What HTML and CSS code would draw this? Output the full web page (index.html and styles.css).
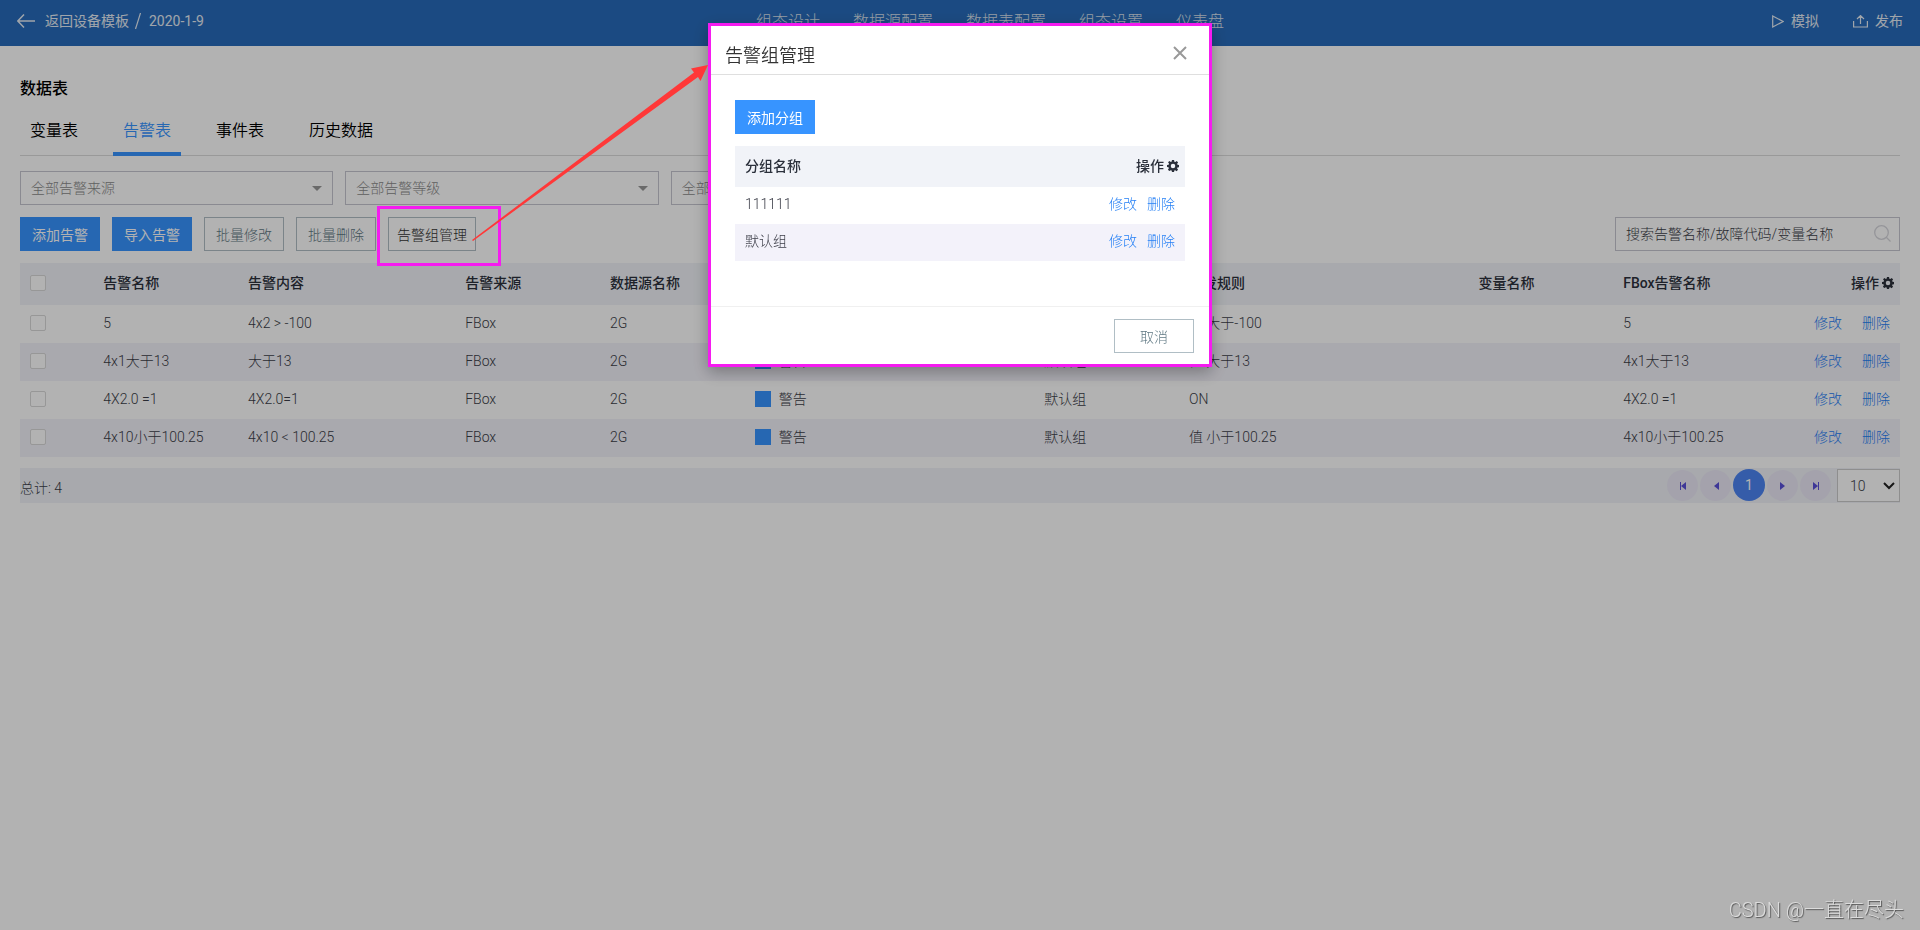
FILE: index.html
```html
<!DOCTYPE html>
<html lang="zh-CN">
<head>
<meta charset="utf-8">
<title>数据表 - 告警表</title>
<link rel="stylesheet" href="styles.css">
</head>
<body>
<svg class="sprite" aria-hidden="true">
  <symbol id="gear" viewBox="0 0 16 16"><path fill-rule="evenodd" d="M6.600 0h2.800l.4 2.200 1.300.5L13 1.400 14.800 3.300l-1.300 1.800.5 1.300 2 .3v2.800l-2.100.4-.5 1.200 1.300 1.900-1.900 1.900-1.800-1.300-1.300.5L9.400 16H6.600l-.4-2-1.200-.5-1.900 1.300-1.900-1.900 1.300-1.800L2 9.800 0 9.400V6.600l2.200-.4.5-1.200L1.400 3.100 3.300 1.200l1.800 1.300L6.300 2zM8 5a3 3 0 1 0 0 6 3 3 0 0 0 0-6z"/></symbol>
  <symbol id="caret" viewBox="0 0 10 5"><path d="M0 0h10L5 5z"/></symbol>
</svg>

<header class="topbar">
  <div class="crumbs">
    <a class="back" href="#"><svg class="back-icon" viewBox="0 0 18 14"><path d="M18 7H1M7 .6.8 7 7 13.400"/></svg>返回设备模板</a>
    <svg class="slash" viewBox="0 0 6 16"><path d="M5.500 0 .5 16"/></svg>
    <span class="crumb-name">2020-1-9</span>
  </div>
  <nav class="mainnav">
    <a href="#">组态设计</a><a href="#">数据源配置</a><a href="#">数据表配置</a><a href="#">组态设置</a><a href="#">仪表盘</a>
  </nav>
  <div class="actions">
    <a href="#"><svg class="play-icon" viewBox="0 0 12 13"><path d="M.7 1v11l10.500-5.500z"/></svg>模拟</a>
    <a href="#"><svg class="publish-icon" viewBox="0 0 15 13"><path d="M.6 6v6h13.800V6M7.500 9V1M4 4l3.500-3.400L11 4"/></svg>发布</a>
  </div>
</header>

<main class="page">
  <h1 class="page-title">数据表</h1>
  <nav class="tabs">
    <a class="tab" href="#">变量表</a><a class="tab tab-active" href="#">告警表</a><a class="tab" href="#">事件表</a><a class="tab" href="#">历史数据</a>
  </nav>

  <div class="filters">
    <div class="picker"><select aria-label="告警来源"><option>全部告警来源</option></select><svg class="caret"><use href="#caret"/></svg></div>
    <div class="picker"><select aria-label="告警等级"><option>全部告警等级</option></select><svg class="caret"><use href="#caret"/></svg></div>
    <div class="picker"><select aria-label="告警组"><option>全部告警组</option></select><svg class="caret"><use href="#caret"/></svg></div>
  </div>

  <div class="toolbar">
    <button class="btn btn-primary">添加告警</button>
    <button class="btn btn-primary">导入告警</button>
    <button class="btn btn-outline">批量修改</button>
    <button class="btn btn-outline">批量删除</button>
    <button class="btn btn-outline btn-dark">告警组管理</button>
    <div class="search">
      <input type="text" aria-label="搜索告警" placeholder="搜索告警名称/故障代码/变量名称">
      <svg class="search-icon" viewBox="0 0 17 17"><circle cx="7.500" cy="7.500" r="6.800"/><path d="m12 12 4.500 4.500"/></svg>
    </div>
  </div>

  <table class="grid alarms">
    <colgroup><col class="c-check"><col class="c-std"><col class="c-text"><col class="c-std"><col class="c-std"><col class="c-wide"><col class="c-std"><col class="c-wide"><col class="c-std"><col></colgroup>
    <thead>
      <tr><th><input type="checkbox" aria-label="全选"></th><th>告警名称</th><th>告警内容</th><th>告警来源</th><th>数据源名称</th><th>告警等级</th><th>告警组</th><th>触发规则</th><th>变量名称</th><th><div class="pair"><span>FBox告警名称</span><span class="ops-head">操作<svg class="gear"><use href="#gear"/></svg></span></div></th></tr>
    </thead>
    <tbody>
      <tr><td><input type="checkbox" aria-label="选择 5"></td><td>5</td><td>4x2 &gt; -100</td><td>FBox</td><td>2G</td><td><span class="level">警告</span></td><td>默认组</td><td>值 大于-100</td><td></td><td><div class="pair"><span>5</span><span class="ops"><a href="#">修改</a><a href="#">删除</a></span></div></td></tr>
      <tr><td><input type="checkbox" aria-label="选择 4x1大于13"></td><td>4x1大于13</td><td>大于13</td><td>FBox</td><td>2G</td><td><span class="level">警告</span></td><td>默认组</td><td>值 大于13</td><td></td><td><div class="pair"><span>4x1大于13</span><span class="ops"><a href="#">修改</a><a href="#">删除</a></span></div></td></tr>
      <tr><td><input type="checkbox" aria-label="选择 4X2.0 =1"></td><td>4X2.0 =1</td><td>4X2.0=1</td><td>FBox</td><td>2G</td><td><span class="level">警告</span></td><td>默认组</td><td>ON</td><td></td><td><div class="pair"><span>4X2.0 =1</span><span class="ops"><a href="#">修改</a><a href="#">删除</a></span></div></td></tr>
      <tr><td><input type="checkbox" aria-label="选择 4x10小于100.25"></td><td>4x10小于100.25</td><td>4x10 &lt; 100.25</td><td>FBox</td><td>2G</td><td><span class="level">警告</span></td><td>默认组</td><td>值 小于100.25</td><td></td><td><div class="pair"><span>4x10小于100.25</span><span class="ops"><a href="#">修改</a><a href="#">删除</a></span></div></td></tr>
    </tbody>
  </table>

  <footer class="pager">
    <span class="total">总计: 4</span>
    <div class="pages">
      <button class="page-btn" aria-label="首页"><svg viewBox="0 0 8 10"><path d="M1 1h1v8H1zM7 1v8L2 5z"/></svg></button>
      <button class="page-btn" aria-label="上一页"><svg viewBox="0 0 8 10"><path d="M7 1v8L2 5z"/></svg></button>
      <button class="page-btn page-current">1</button>
      <button class="page-btn" aria-label="下一页"><svg viewBox="0 0 8 10"><path d="M1 1v8l5-4z"/></svg></button>
      <button class="page-btn" aria-label="末页"><svg viewBox="0 0 8 10"><path d="M6 1h1v8H6zM1 1v8l5-4z"/></svg></button>
      <div class="size"><select aria-label="每页条数"><option>10</option></select><svg class="chevron" viewBox="0 0 12 8"><path d="m1 1 5 5 5-5"/></svg></div>
    </div>
  </footer>
</main>

<div class="backdrop">
  <section class="modal" role="dialog" aria-labelledby="dialog-title">
    <header class="modal-head">
      <h2 id="dialog-title">告警组管理</h2>
      <button class="close" aria-label="关闭"><svg viewBox="0 0 14 14"><path d="m1 1 12 12M13 1 1 13"/></svg></button>
    </header>
    <div class="modal-body">
      <button class="btn btn-primary">添加分组</button>
      <table class="grid groups">
        <thead><tr><th>分组名称</th><th><span class="ops-head">操作<svg class="gear"><use href="#gear"/></svg></span></th></tr></thead>
        <tbody>
          <tr><td>111111</td><td><span class="ops"><a href="#">修改</a><a href="#">删除</a></span></td></tr>
          <tr><td>默认组</td><td><span class="ops"><a href="#">修改</a><a href="#">删除</a></span></td></tr>
        </tbody>
      </table>
    </div>
    <footer class="modal-foot"><button class="btn btn-outline">取消</button></footer>
  </section>
</div>

<div class="marker"></div>
<svg class="arrow" viewBox="0 0 236 176"><path d="M0 175 222 7.500 219 3.500 236 0 228.500 16 226 12 1 176z"/></svg>
<div class="watermark">CSDN @一直在尽头</div>
</body>
</html>
```

FILE: styles.css
```css
* { box-sizing: border-box; }
body {
  margin: 0;
  min-height: 100vh;
  background: #fff;
  color: #3c3e48;
  font: 300 14px/20px Roboto, "Noto Sans CJK SC", sans-serif;
  overflow: hidden;
}
a { color: #2680f5; text-decoration: none; }
h1, h2 { margin: 0; }
button, input, select { font: inherit; color: inherit; margin: 0; }
svg { display: block; }
.sprite { position: absolute; width: 0; height: 0; }

.topbar {
  display: grid;
  grid-template-columns: 1fr auto 1fr;
  align-items: center;
  height: 46px;
  padding: 0 17px 4px;
  background: #286bba;
}
.topbar a, .crumb-name { color: #e6edf5; }
.topbar svg { fill: none; stroke: #e6edf5; stroke-width: 1.2; }
.crumbs { display: flex; align-items: center; gap: 6px; font-weight: 400; }
.back { display: flex; align-items: center; gap: 10px; }
.topbar .back-icon { width: 18px; height: 14px; stroke-width: 1.5; }
.slash { width: 6px; height: 16px; }
.crumb-name { padding-left: 2px; }
.mainnav { display: flex; gap: 33px; padding: 1px 0 0 60px; font-size: 16px; }
.topbar .mainnav a { color: #d9e2ee; }
.actions { display: flex; justify-content: flex-end; gap: 34px; font-weight: 400; }
.actions a { display: flex; align-items: center; gap: 7px; }
.play-icon { width: 12px; height: 13px; }
.publish-icon { width: 15px; height: 13px; }

.page { padding: 31px 20px 0; }
.page-title { color: #000; font-size: 16px; font-weight: 500; line-height: 24px; }
.tabs {
  display: flex;
  gap: 25px;
  height: 55px;
  border-bottom: 1px solid #dcdcdc;
  font-size: 16px;
  font-weight: 350;
}
.tab {
  height: 55px;
  padding: 18px 10px 0;
  border-bottom: 4px solid transparent;
  color: #000;
  line-height: 24px;
}
.tab-active { color: #3794ff; border-bottom-color: #3794ff; }

.filters { display: flex; gap: 12px; margin-top: 15px; }
.picker { position: relative; width: calc(100% / 6); }
.picker select {
  display: block;
  appearance: none;
  width: 100%;
  height: 34px;
  padding: 0 30px 0 10px;
  border: 1px solid #c6c6d0;
  border-radius: 0;
  background: #fff;
  color: #8c8c8c;
}
.caret { position: absolute; right: 11px; top: 15px; width: 10px; height: 5px; fill: #999; }

.toolbar { display: flex; gap: 12px; margin-top: 12px; }
.btn {
  min-width: 80px;
  height: 34px;
  padding: 1px 8px 0;
  border: 1px solid #b0bec5;
  background: transparent;
  color: #5f7883;
}
.btn-primary { border-color: #3794ff; background: #3794ff; color: #fff; font-weight: 400; }
.btn-dark { min-width: 88px; color: #333; }
.search { position: relative; width: 285px; margin-left: auto; }
.search input {
  display: block;
  width: 100%;
  height: 34px;
  padding: 0 40px 0 10px;
  border: 1px solid #c6c6d0;
  background: #fff;
}
.search input::placeholder { color: #3c3e48; opacity: 1; }
.search-icon { position: absolute; right: 9px; top: 8px; width: 17px; height: 17px; fill: none; stroke: #d6d6dc; stroke-width: 1.3; }

.grid { width: 100%; margin-top: 12px; border-collapse: collapse; table-layout: fixed; }
.grid th, .grid td { padding: 0 10px 2px; text-align: left; white-space: nowrap; }
.grid th { height: 42px; background: #f1f3f8; color: #2b303b; font-weight: 500; }
.grid td { height: 38px; }
.grid tbody tr:nth-child(even) { background: #f3f2fa; }
.c-check { width: 3.9%; }
.c-std { width: 7.7%; }
.c-text { width: 11.55%; }
.c-wide { width: 15.4%; }
.pair { display: flex; justify-content: space-between; }
.ops { display: flex; justify-content: flex-end; gap: 20px; }
.ops-head { display: flex; align-items: center; justify-content: flex-end; gap: 3px; margin-right: -4px; }
.gear { width: 12px; height: 12px; fill: #2b303b; }
.grid input[type="checkbox"] {
  display: block;
  appearance: none;
  width: 16px;
  height: 16px;
  border: 1px solid #d8d8d8;
  border-radius: 2px;
  background: #fff;
}
.level { display: flex; align-items: center; gap: 8px; }
.level::before { content: ""; width: 16px; height: 16px; background: #3794ff; }

.pager {
  display: flex;
  align-items: center;
  justify-content: space-between;
  height: 35px;
  margin-top: 11px;
  background: #f1f3f8;
}
.total { padding-top: 4px; }
.pages { display: flex; align-items: center; gap: 2px; }
.page-btn {
  width: 31px;
  height: 31px;
  padding: 0;
  border: 0;
  border-radius: 50%;
  background: #ebe9f6;
}
.page-btn svg { width: 8px; height: 10px; margin: 0 auto; fill: #5a50d8; }
.page-current { align-self: flex-start; width: 32px; height: 32px; background: #4c85f3; color: #fff; font-weight: 400; }
.size { position: relative; margin-left: 4px; }
.size select {
  display: block;
  appearance: none;
  width: 63px;
  height: 33px;
  padding: 0 12px;
  border: 1px solid #ccc;
  border-radius: 0;
  background: #fff;
}
.chevron { position: absolute; right: 5px; top: 13px; width: 12px; height: 8px; fill: none; stroke: #222; stroke-width: 2; }

.backdrop {
  position: fixed;
  inset: 0;
  display: flex;
  justify-content: center;
  align-items: flex-start;
  padding-top: 23px;
  background: rgba(0, 0, 0, 0.3);
}
.modal {
  width: 504px;
  border: 3px solid #f51bf0;
  background: #fff;
  box-shadow: 0 5px 15px rgba(0, 0, 0, 0.3);
}
.modal-head {
  display: flex;
  justify-content: space-between;
  align-items: center;
  height: 49px;
  padding: 11px 21px 0 14px;
  border-bottom: 1px solid #dfdfdf;
}
.modal-head h2 { color: #333; font-size: 18px; font-weight: 350; line-height: 26px; }
.close { padding: 0 0 6px; border: 0; background: none; }
.close svg { width: 16px; height: 14px; fill: none; stroke: #999; stroke-width: 2; }
.modal-body { min-height: 231px; padding: 25px 24px 0; }
.modal-foot {
  display: flex;
  justify-content: flex-end;
  padding: 12px 15px 11px;
  border-top: 1px solid #f0f0f0;
}
.groups td { height: 37px; padding-bottom: 4px; }
.groups th { height: 41px; }
.groups .ops { gap: 10px; }

.marker {
  position: absolute;
  left: 377px;
  top: 206px;
  width: 124px;
  height: 60px;
  border: 3px solid #f51bf0;
}
.arrow { position: absolute; left: 472px; top: 65px; width: 236px; height: 176px; fill: #ff3838; }
.watermark {
  position: absolute;
  right: 16px;
  bottom: 6px;
  color: #dcdcdc;
  font-size: 20px;
  line-height: 28px;
  text-shadow: 1px 1px 1px #555;
}
```
